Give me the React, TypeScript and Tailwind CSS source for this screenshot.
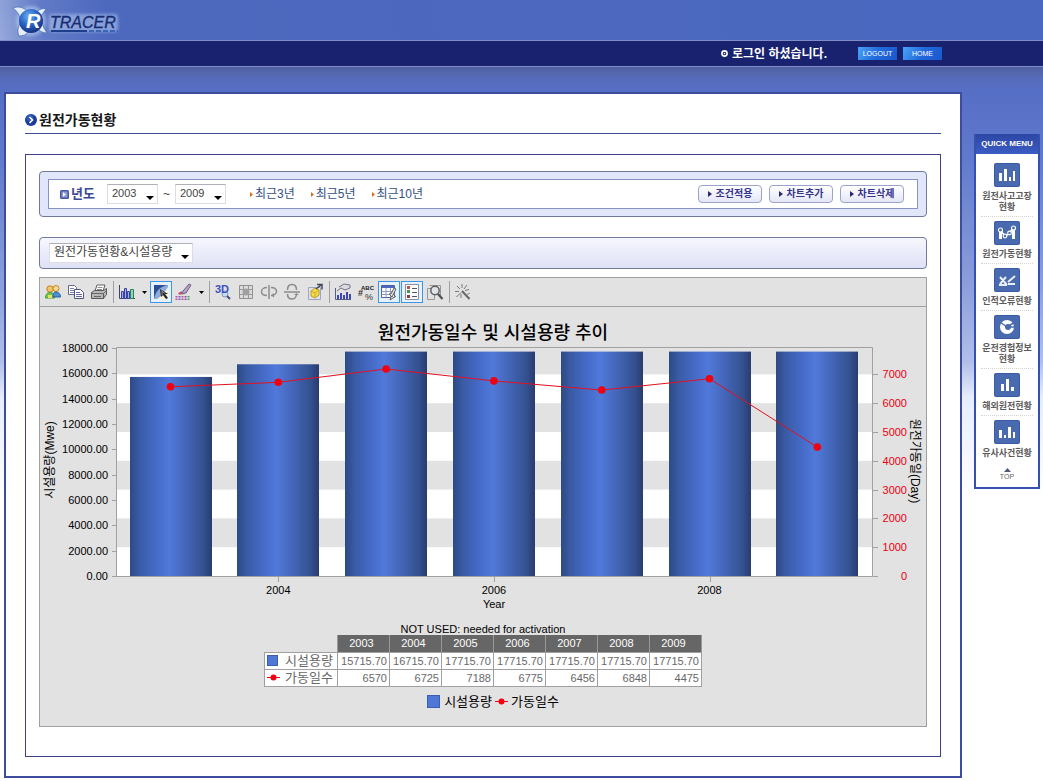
import React, { Fragment } from "react";

interface yearData {
   year: string;
   capacity: number;
   days: number;
}

interface quickItem {
   label: string[];
   icon: React.ReactNode;
}

const data: yearData[] = [
   { year: "2003", capacity: 15715.7, days: 6570 },
   { year: "2004", capacity: 16715.7, days: 6725 },
   { year: "2005", capacity: 17715.7, days: 7188 },
   { year: "2006", capacity: 17715.7, days: 6775 },
   { year: "2007", capacity: 17715.7, days: 6456 },
   { year: "2008", capacity: 17715.7, days: 6848 },
   { year: "2009", capacity: 17715.7, days: 4475 },
];

const Logo: React.FC = () => (
   <svg className="w-[124px] h-10" viewBox="0 0 124 40" role="img" aria-label="R-TRACER">
      <defs>
         <radialGradient id="globe" cx="0.4" cy="0.3" r="0.8">
            <stop offset="0" stopColor="#6fb0f0" />
            <stop offset="0.45" stopColor="#2a66c8" />
            <stop offset="1" stopColor="#10246e" />
         </radialGradient>
         <filter id="glow" x="-20%" y="-40%" width="140%" height="180%">
            <feGaussianBlur stdDeviation="1.8" />
         </filter>
      </defs>
      <g fill="#b4c8f0" filter="url(#glow)">
         <circle cx="31" cy="21" r="15" opacity="0.6" />
         <rect x="49" y="14" width="69" height="18" rx="4" opacity="0.55" />
      </g>
      <g fill="#e4eefb" stroke="#4c72ac" strokeWidth="0.8">
         <path d="M13 8c5-2 10-1 14 3l-7 7c-1-4-3-7-7-10z" />
         <path d="M46 9c-3-1-7 0-9 3l4 5c1-3 3-5 5-8z" />
         <path d="M19 36c-2-5-1-9 1-12l8 8c-2 3-5 4-9 4z" />
         <path d="M47 33c-4 0-8-2-10-5l5-6c1 5 3 8 5 11z" />
      </g>
      <circle cx="31" cy="21" r="12" fill="url(#globe)" />
      <text x="26" y="28" className="font-['Liberation_Sans',sans-serif] text-[20px] font-bold italic" fill="#fff">R</text>
      <text x="50" y="28" className="font-['Liberation_Sans',sans-serif] text-[16px] italic" fill="#152c70" stroke="#152c70" strokeWidth="0.3">TRACER</text>
      <path d="M51 31h36" stroke="#1b3f8c" strokeWidth="2" />
      <path d="M89 31h29" stroke="#3c66b4" strokeWidth="2" strokeDasharray="5 2" />
   </svg>
);

const TopBar: React.FC = () => (
   <header>
      <div className="h-10 bg-[linear-gradient(80deg,#97a9db_0,#627bc7_45px,#4d69be_110px,#4b68c0_100%)]">
         <Logo />
      </div>
      <div className="h-[27px] pr-[101px] flex justify-end items-center border-y border-[#7f8cc8] bg-[#18226f]">
         <svg className="w-[7px] h-[7px] mr-1" viewBox="0 0 7 7">
            <circle cx="3.5" cy="3.5" r="2.6" fill="none" stroke="#fff" strokeWidth="1.6" />
            <circle cx="3.5" cy="3.5" r="0.8" fill="#fff" />
         </svg>
         <span className="text-xs font-bold text-white mr-[31px]">로그인 하셨습니다.</span>
         <div className="flex gap-[6px]">
            {["LOGOUT", "HOME"].map((name) => (
               <button
                  key={name}
                  type="button"
                  className="w-[39px] h-[13px] text-[7px] leading-[13px] text-white bg-[linear-gradient(120deg,#4ba4f8,#2169dc_50%,#1b58cc)]"
               >
                  {name}
               </button>
            ))}
         </div>
      </div>
   </header>
);

const Caret: React.FC = () => (
   <svg className="w-2 h-1" viewBox="0 0 8 4">
      <path d="M0 0h8L4 4z" fill="#000" />
   </svg>
);

const Picker: React.FC<{ label: string; value: string; options: string[]; className: string }> = ({
   label,
   value,
   options,
   className,
}) => (
   <span className={`relative inline-flex h-5 ${className}`}>
      <select
         aria-label={label}
         defaultValue={value}
         className="appearance-none w-full h-full pl-1 pb-1 bg-white border border-[#dcdce4] border-t-[#b0b0b8] text-[#444] text-[length:inherit]"
      >
         {options.map((option) => (
            <option key={option}>{option}</option>
         ))}
      </select>
      <span className="absolute right-1 bottom-1 flex pointer-events-none">
         <Caret />
      </span>
   </span>
);

const FilterBar: React.FC = () => (
   <div className="px-2 py-[7px] rounded border border-[#717a9e] bg-[#e1e6fb]">
      <div className="h-[30px] pl-[11px] pr-[13px] flex items-center border border-[#8794bf] bg-white">
         <svg className="w-[9px] h-[9px] mr-[2px]" viewBox="0 0 9 9">
            <rect width="9" height="9" rx="1.5" fill="#4858a0" />
            <rect x="1.5" y="1.5" width="6" height="6" fill="#8e9ad0" />
            <path d="M3 2.2 6 4.5 3 6.8z" fill="#fff" />
         </svg>
         <span className="text-[13px] font-bold text-[#3b4a94]">년도</span>
         <Picker
            label="시작 년도"
            value="2003"
            options={data.map((d) => d.year)}
            className="w-[51px] ml-3 text-[11px]"
         />
         <span className="w-[17px] text-center text-xs text-[#444]">~</span>
         <Picker
            label="종료 년도"
            value="2009"
            options={data.map((d) => d.year)}
            className="w-[51px] text-[11px]"
         />
         <nav className="ml-6 flex gap-4">
            {["최근3년", "최근5년", "최근10년"].map((text) => (
               <a key={text} href="#" className="flex items-center gap-[2px] text-xs text-[#33507f]">
                  <svg className="w-[3px] h-[5px]" viewBox="0 0 3 5">
                     <path d="M0 0 3 2.5 0 5z" fill="#d8701c" />
                  </svg>
                  {text}
               </a>
            ))}
         </nav>
         <div className="ml-auto flex gap-[7px]">
            {["조건적용", "차트추가", "차트삭제"].map((text) => (
               <button
                  key={text}
                  type="button"
                  className="w-16 h-[18px] flex items-center justify-center gap-1 rounded-sm border border-[#9aa3cc] bg-linear-to-b from-white to-[#e4e6f6] text-[10px] leading-4 font-bold text-[#34348c]"
               >
                  <svg className="w-[4px] h-[6px]" viewBox="0 0 4 6">
                     <path d="M0 0 4 3 0 6z" fill="#28286c" />
                  </svg>
                  {text}
               </button>
            ))}
         </div>
      </div>
   </div>
);

const ToolButton: React.FC<{ title: string; active?: boolean; children: React.ReactNode }> = ({
   title,
   active,
   children,
}) => (
   <button
      type="button"
      title={title}
      className={`w-[22px] h-[22px] flex items-center justify-center ${active ? "border border-[#3c96e8] bg-[#e6f1fb]" : ""}`}
   >
      <svg className="w-[18px] h-[18px] shrink-0" viewBox="0 0 18 18" fill="none">
         {children}
      </svg>
   </button>
);

const Separator: React.FC = () => (
   <span className="w-1 h-[22px] flex justify-center">
      <span className="w-px bg-[#a0a0a0]" />
   </span>
);

const MenuArrow: React.FC<{ title: string }> = ({ title }) => (
   <button type="button" title={title} className="w-[10px] h-[22px] flex items-center justify-center">
      <svg className="w-[5px] h-[3px]" viewBox="0 0 5 3">
         <path d="M0 0h5L2.5 3z" fill="#000" />
      </svg>
   </button>
);

const ChartToolbar: React.FC = () => (
   <div className="h-[29px] pl-[2px] flex items-center gap-px border-b border-[#a0a0a0]">
      <ToolButton title="사용자">
         <circle cx="6" cy="6" r="3.2" fill="#f0c468" stroke="#c88428" />
         <path d="M1.5 15c0-4 2-5.5 4.5-5.5s4.5 1.5 4.5 5.5z" fill="#6cc850" stroke="#48983c" />
         <circle cx="12" cy="5.5" r="3" fill="#f6d890" stroke="#c88428" />
         <path d="M9 14c0-4 1-5 3-5s4.500 1.500 4.500 5z" fill="#4c90d8" stroke="#2c5c94" />
         <path d="M4 15v-3h4v3z" fill="#e8e060" />
      </ToolButton>
      <ToolButton title="복사">
         <path d="M1.5 2.5h6l2 2v7h-8z" fill="#fff" stroke="#64688c" />
         <path d="M3 5.5h4M3 7.5h5M3 9.5h4" stroke="#7c80b0" />
         <path d="M7.5 6.5h6l3 3v6h-9z" fill="#fff" stroke="#50547c" />
         <path d="M9 9.5h4M9 11.5h6M9 13.5h6" stroke="#6468a4" />
      </ToolButton>
      <ToolButton title="인쇄">
         <path d="m5 8 2-6h8l-2 6" fill="#fff" stroke="#606060" />
         <path d="M7.5 4.5h5M7 6.5h5" stroke="#909090" />
         <path d="m1.5 9.5 3-2h9l3-2v6l-3 4h-12z" fill="#b8b8b8" stroke="#585858" />
         <path d="M2 10.5h11.5l3-3M4 13.5h7" stroke="#686868" />
         <path d="M13.5 10.5v5" stroke="#585858" />
      </ToolButton>
      <Separator />
      <ToolButton title="차트 종류">
         <path d="M1.5 2v13.5H17" stroke="#404060" />
         <path d="M3.5 8.5h2v7h-2zM6.5 5.5h2v10h-2zM9.5 8.5h2v7h-2z" fill="#9cb0f0" stroke="#3c44a0" />
         <path d="M12.5 6.5h3v9h-3z" fill="#90d8b4" stroke="#308060" />
      </ToolButton>
      <MenuArrow title="차트 종류 목록" />
      <ToolButton title="선택" active>
         <path d="M2 2h14v14H2z" fill="#2c4c94" />
         <path d="M2 16C3 9 8 3 16 2v14z" fill="#8cacdc" />
         <path d="M16 4v12H5C8 14 12 10 16 4z" fill="#f4f0dc" />
         <path d="m8 6 1 8 2-2 3 4 2-1-3-4h3z" fill="#202020" />
         <path d="m9 7.500 4 3M10 9v3" stroke="#e8e8e8" strokeWidth="0.600" />
      </ToolButton>
      <ToolButton title="색상">
         <path d="m7 11 1-3 6-7 2 1-5 8z" fill="#b4a0c8" stroke="#706080" />
         <path d="M7 11c-1 1-2 1-4 0 1-2 3-3 4-2" fill="#c85070" />
         <path d="M1.5 13v4M7.5 13v4" stroke="#c050a0" strokeWidth="2" strokeDasharray="1.5 1" />
         <path d="M4.5 13v4M10.5 13v4" stroke="#8058b8" strokeWidth="2" strokeDasharray="1.5 1" />
         <path d="M13.5 13v4" stroke="#50a060" strokeWidth="2" strokeDasharray="1.5 1" />
      </ToolButton>
      <MenuArrow title="색상 목록" />
      <Separator />
      <ToolButton title="3D">
         <circle cx="11" cy="11" r="3" fill="#c4dcf4" stroke="#8098c0" />
         <path d="m13 13 3 3" stroke="#504880" strokeWidth="2" />
         <text x="1" y="10" className="font-['Liberation_Sans',sans-serif] text-[11px] font-bold" fill="#3c50c0">3D</text>
      </ToolButton>
      <ToolButton title="격자">
         <path d="M2.5 2.5h13v13h-13z" fill="#dcdcdc" stroke="#909090" />
         <path d="M6.5 2.5v13M11.5 2.5v13M2.5 6.5h13M2.5 11.5h13" stroke="#989898" />
         <circle cx="9" cy="9" r="3.5" fill="#a0a0a0" />
      </ToolButton>
      <ToolButton title="좌우 회전">
         <path d="M9 2v14" stroke="#8c8c8c" strokeWidth="1.5" />
         <path d="M7 12.5C3 12.500 1.500 10.500 1.500 8.500s2-4 5.500-4M11 4.500c4 0 5.500 2 5.500 4s-2 4-5.500 4" stroke="#8c8c8c" strokeWidth="1.5" />
         <path d="m14 10-3 2.500 3 2z" fill="#8c8c8c" />
      </ToolButton>
      <ToolButton title="상하 회전">
         <path d="M1 9h16" stroke="#8c8c8c" strokeWidth="1.5" />
         <path d="M4.500 7c0-4 2-5.500 4.500-5.500S13.500 3.500 13.500 7M4.500 11c0 4 2 5 4.500 5s4.500-2 4.500-5" stroke="#8c8c8c" strokeWidth="1.5" />
         <path d="m11 12 2.500-2 2.500 2z" fill="#8c8c8c" />
      </ToolButton>
      <ToolButton title="내보내기">
         <path d="M2.5 4.5h12v12h-12z" fill="#e4e0ec" stroke="#98a8c4" />
         <path d="m5 8 4-3 4 2v5l-4 3-4-2z" fill="#f4dc48" stroke="#b89c28" />
         <path d="m5 8 4 2 4-3M9 10v5" stroke="#c8ac30" />
         <path d="m10 6 5-4m-4-.5h5v5" stroke="#404858" strokeWidth="1.5" />
      </ToolButton>
      <Separator />
      <ToolButton title="축 설정">
         <path d="M1.5 5v11.5H17" stroke="#585c88" />
         <path d="M4 12v4M7 10v6M10 12v4M13 9v7M16 11v5" stroke="#3c48b8" strokeWidth="2" />
         <path d="m3 8 4-3 4 2 5-2V2l-6-1-5 3" fill="#dcd8e0" stroke="#787488" />
      </ToolButton>
      <ToolButton title="값 표시">
         <text x="4" y="7" className="font-['Liberation_Sans',sans-serif] text-[6px] font-bold" fill="#202020">ABC</text>
         <text x="1" y="13" className="font-['Liberation_Sans',sans-serif] text-[9px] font-bold" fill="#303030">#</text>
         <text x="8" y="17" className="font-['Liberation_Sans',sans-serif] text-[9px]" fill="#303030">%</text>
      </ToolButton>
      <ToolButton title="데이터 표" active>
         <path d="M1.5 2.5h13v12h-13z" fill="#fff" stroke="#4c60a0" />
         <path d="M2 3h12v2H2z" fill="#4c68c0" />
         <path d="M1.5 8.5h13M1.5 11.5h13M6 5v9.500M10.500 5v9.500" stroke="#8c9cc8" />
         <path d="m9 11 3 3 4-8-2-1-3 6zM11 14l-1 3 6-4" fill="#e8e4d4" stroke="#606060" />
      </ToolButton>
      <ToolButton title="범례" active>
         <path d="M2.5 1.5h13v15h-13z" fill="#fff" stroke="#8890a4" />
         <path d="M4 3h3v3H4z" fill="#c85040" />
         <path d="M4 7h3v3H4z" fill="#50944c" />
         <path d="M4 12h3v3H4z" fill="#8c3c50" />
         <path d="M9 5.500h5M9 9.500h5M9 13.500h5" stroke="#505868" />
      </ToolButton>
      <ToolButton title="확대">
         <path d="M1.5 5.5h7v11h-7zM3.5 2.5h11v11" stroke="#989898" />
         <circle cx="9" cy="7.5" r="4.2" fill="#e0e4e8" stroke="#606068" strokeWidth="1.5" />
         <path d="m12 11 4.500 5" stroke="#505058" strokeWidth="2.2" />
      </ToolButton>
      <Separator />
      <ToolButton title="속성">
         <path d="m8 8 7.500 8" stroke="#686868" strokeWidth="2" />
         <path d="m3 3 3 3M8 1v4M13 2l-3 4M1 8.500h4M2.500 14 7 9.500M11 7.500l4-1M7 11v4" stroke="#787878" />
         <path d="m12 12 4-2" stroke="#909090" />
      </ToolButton>
   </div>
);

const PLOT = { left: 77, right: 833, top: 5, bottom: 233 };
const plotHeight = PLOT.bottom - PLOT.top;
const barX = (i: number) => 130.5 + i * 107.8;
const capacityY = (v: number) => PLOT.bottom - (v / 18000) * plotHeight;
const daysY = (v: number) => PLOT.bottom - v * 0.0288;

const Chart: React.FC = () => (
   <svg
      className="block w-full h-auto font-['Liberation_Sans','Noto_Sans_CJK_KR',sans-serif]"
      viewBox="0 0 886 268"
      role="img"
      aria-label="원전가동일수 및 시설용량 추이"
   >
      <defs>
         <linearGradient id="bar">
            <stop offset="0" stopColor="#2d4a86" />
            <stop offset="0.12" stopColor="#3a5ba6" />
            <stop offset="0.32" stopColor="#456bc8" />
            <stop offset="0.48" stopColor="#5079da" />
            <stop offset="0.7" stopColor="#4264b4" />
            <stop offset="0.9" stopColor="#34508f" />
            <stop offset="1" stopColor="#283c6e" />
         </linearGradient>
      </defs>
      {[0, 2000, 4000, 6000].map((v) => (
         <rect key={v} x={PLOT.left} y={daysY(v + 1000)} width={PLOT.right - PLOT.left} height="28.8" fill="#fff" />
      ))}
      <path d="M76.5 4.5h756v229h-756z" fill="none" stroke="#a0a0a0" />
      {data.map((d, i) => (
         <rect
            key={d.year}
            x={Math.round(barX(i)) - 41}
            y={capacityY(d.capacity)}
            width="82"
            height={PLOT.bottom - capacityY(d.capacity)}
            fill="url(#bar)"
         />
      ))}
      <polyline
         points={data.map((d, i) => `${barX(i)},${daysY(d.days)}`).join(" ")}
         fill="none"
         stroke="#e41020"
      />
      {data.map((d, i) => (
         <circle key={d.year} cx={barX(i)} cy={daysY(d.days)} r="3.8" fill="#f00010" />
      ))}
      {[0, 2000, 4000, 6000, 8000, 10000, 12000, 14000, 16000, 18000].map((v) => (
         <Fragment key={v}>
            <path d={`M72 ${Math.round(capacityY(v)) + 0.5}h5`} stroke="#a0a0a0" />
            <text x="68" y={capacityY(v) + 4} textAnchor="end" className="text-[11px]">
               {v.toFixed(2)}
            </text>
         </Fragment>
      ))}
      {[0, 1000, 2000, 3000, 4000, 5000, 6000, 7000].map((v) => (
         <Fragment key={v}>
            <path d={`M833 ${Math.round(daysY(v)) + 0.5}h5`} stroke="#a0a0a0" />
            <text x="867" y={daysY(v) + 4} textAnchor="end" fill="#ec0010" className="text-[11px]">
               {v}
            </text>
         </Fragment>
      ))}
      {[1, 3, 5].map((i) => (
         <Fragment key={i}>
            <path d={`M${Math.round(barX(i)) + 0.5} 234v5`} stroke="#a0a0a0" />
            <text x={barX(i)} y="251" textAnchor="middle" className="text-[11px]">
               {data[i].year}
            </text>
         </Fragment>
      ))}
      <text x="454" y="265" textAnchor="middle" className="text-[11px]">Year</text>
      <text transform="translate(14 117) rotate(-90)" textAnchor="middle" className="text-xs">시설용량(Mwe)</text>
      <text transform="translate(871 118) rotate(90)" textAnchor="middle" className="text-xs">원전가동일(Day)</text>
   </svg>
);

const LineMark: React.FC = () => (
   <svg className="w-[13px] h-[7px] shrink-0" viewBox="0 0 13 7">
      <path d="M0 3.5h13" stroke="#f00010" />
      <circle cx="6.5" cy="3.5" r="3" fill="#f00010" />
   </svg>
);

const DataTable: React.FC = () => (
   <table className="mt-3 mx-auto w-[438px] table-fixed border-collapse text-[11px] leading-4 text-[#686868]">
      <caption className="text-[11px] leading-3 text-black">NOT USED: needed for activation</caption>
      <colgroup>
         <col className="w-[73px]" />
      </colgroup>
      <thead>
         <tr className="h-[17px]">
            <td />
            {data.map((d) => (
               <th key={d.year} scope="col" className="p-0 pr-1 font-normal text-white bg-[#666] border-x border-[#9a9a9a]">
                  {d.year}
               </th>
            ))}
         </tr>
      </thead>
      <tbody>
         <tr className="h-[17px] bg-white">
            <th scope="row" className="p-0 border border-[#a0a0a0] font-normal text-[13px]">
               <span className="flex items-center gap-[7px] pl-[2px] whitespace-nowrap">
                  <span className="w-[11px] h-[11px] bg-[#4f78d6] border border-[#3c5eb0]" />
                  시설용량
               </span>
            </th>
            {data.map((d) => (
               <td key={d.year} className="p-0 pr-[2px] text-right border border-[#a0a0a0]">
                  {d.capacity.toFixed(2)}
               </td>
            ))}
         </tr>
         <tr className="h-[17px] bg-white">
            <th scope="row" className="p-0 border border-[#a0a0a0] font-normal text-[13px]">
               <span className="flex items-center gap-[5px] pl-[2px] whitespace-nowrap">
                  <LineMark />
                  가동일수
               </span>
            </th>
            {data.map((d) => (
               <td key={d.year} className="p-0 pr-[2px] text-right border border-[#a0a0a0]">
                  {d.days}
               </td>
            ))}
         </tr>
      </tbody>
   </table>
);

const ChartPanel: React.FC = () => (
   <section className="mt-2 border border-[#a0a0a0] bg-[#e2e2e2]">
      <ChartToolbar />
      <h2 className="pt-4 pl-5 text-center text-[18px] leading-5 font-medium text-black">
         원전가동일수 및 시설용량 추이
      </h2>
      <Chart />
      <DataTable />
      <div className="mt-[6px] pb-[15px] pl-5 h-[33px] flex justify-center items-center text-[13px] leading-[18px] text-black">
         <span className="w-[13px] h-[13px] mr-1 bg-[#4f78d6] border border-[#3c5eb0]" />
         시설용량
         <span className="flex mx-[3px]">
            <LineMark />
         </span>
         가동일수
      </div>
   </section>
);

const quickItems: quickItem[] = [
   {
      label: ["원전사고고장", "현황"],
      icon: <path d="M5 10h3v8H5zM10 6h3v12h-3zM15 14h2v4h-2zM19 8h2v10h-2z" fill="#fff" />,
   },
   {
      label: ["원전가동현황"],
      icon: (
         <g stroke="#fff" fill="none">
            <path d="M6.5 9v9M19.5 8v10" strokeWidth="3" />
            <path d="m7 10 4 5 4-2 4-6" strokeWidth="1.5" />
            <g fill="#4a6ab0" strokeWidth="1.2">
               <circle cx="6.5" cy="9" r="2" />
               <circle cx="11" cy="15" r="1.8" />
               <circle cx="15.5" cy="12" r="1.8" />
               <circle cx="19.5" cy="7" r="2" />
            </g>
         </g>
      ),
   },
   {
      label: ["인적오류현황"],
      icon: (
         <path d="m6 9 7 8M12 9l-6 7M5 17h8M14 14l7-6M14 16h7" stroke="#e8eefa" fill="none" strokeWidth="2" />
      ),
   },
   {
      label: ["운전경험정보", "현황"],
      icon: (
         <g>
            <circle cx="13" cy="12" r="7" fill="#fff" />
            <circle cx="14" cy="12" r="3" fill="#4a6ab0" />
            <path d="m13 12 8-5M13 12 6 7M15 12h6" stroke="#4a6ab0" strokeWidth="1.5" />
         </g>
      ),
   },
   {
      label: ["해외원전현황"],
      icon: <path d="M7 11h3v7H7zM12 6h3v12h-3zM17 14h3v4h-3z" fill="#fff" />,
   },
   {
      label: ["유사사건현황"],
      icon: <path d="M5 10h3v8H5zM10 15h2v3h-2zM14 7h3v11h-3zM19 12h2v6h-2z" fill="#fff" />,
   },
];

const QuickMenu: React.FC = () => (
   <aside className="mt-[42px] w-[66px] shrink-0 self-start border-2 border-t-0 border-[#3650b0] bg-white">
      <h2 className="h-5 leading-5 text-center text-[8px] font-bold text-white bg-linear-to-b from-[#2c47a4] to-[#3c5cc4]">
         QUICK MENU
      </h2>
      <ul className="pt-[5px] px-[5px]">
         {quickItems.map((item, index) => (
            <li
               key={item.label[0]}
               className={`pt-1 pb-[3px] border-b border-dotted ${index === quickItems.length - 1 ? "border-transparent" : "border-[#d4d4d4]"}`}
            >
               <a href="#" className="flex flex-col items-center gap-1">
                  <svg className="w-[26px] h-6" viewBox="0 0 26 24">
                     <rect width="26" height="24" rx="2" fill="#3a5aa4" />
                     <rect x="1" y="1" width="24" height="22" rx="1" fill="#4a6ab0" />
                     {item.icon}
                  </svg>
                  <span className="text-[9px] leading-[11px] font-bold text-[#5c5c5c] text-center">
                     {item.label.map((line) => (
                        <span key={line} className="block whitespace-nowrap">
                           {line}
                        </span>
                     ))}
                  </span>
               </a>
            </li>
         ))}
      </ul>
      <a href="#" className="pt-[5px] pb-[5px] flex flex-col items-center text-[7px] leading-[10px] text-[#666]">
         <svg className="w-[7px] h-1" viewBox="0 0 7 4">
            <path d="M3.5 0 7 4H0z" fill="#505878" />
         </svg>
         TOP
      </a>
   </aside>
);

const App: React.FC = () => {
   return (
      <div className="min-h-screen flex flex-col bg-white font-['Liberation_Sans','Noto_Sans_CJK_KR',sans-serif]">
         <TopBar />
         <div className="grow pt-[25px] pb-[3px] pl-1 pr-[3px] flex gap-3 bg-[linear-gradient(180deg,#50609f_0,#566bb8_10px,#566fc6_24px,#6079cc_90px,#8c9fdc_220px,#b0bfea_295px,#e6edfb_330px,#ffffff_430px)]">
            <main className="grow min-w-0 px-[19px] pt-[17px] pb-[19px] border-2 border-[#3d4c9c] bg-white">
               <h1 className="pb-1 flex items-center gap-[2px] border-b border-[#3d4c9c] text-[14px] leading-[18px] font-bold text-[#181818]">
                  <svg className="w-3 h-3" viewBox="0 0 12 12">
                     <circle cx="6" cy="6" r="6" fill="#1c3c9c" />
                     <circle cx="5" cy="4" r="3.5" fill="#4070d0" opacity="0.6" />
                     <path d="m4.5 3 3 3-3 3" fill="none" stroke="#fff" strokeWidth="1.6" />
                  </svg>
                  원전가동현황
               </h1>
               <div className="mt-5 px-[13px] pt-4 pb-[29px] border border-[#3f3f8c]">
                  <FilterBar />
                  <div className="mt-5 h-8 pl-[9px] flex items-center rounded border border-[#717a9e] bg-linear-to-b from-[#f7f7fe] to-[#dfe1f5]">
                     <Picker
                        label="차트 선택"
                        value="원전가동현황&시설용량"
                        options={["원전가동현황&시설용량"]}
                        className="w-36 text-xs"
                     />
                  </div>
                  <ChartPanel />
               </div>
            </main>
            <QuickMenu />
         </div>
      </div>
   );
};

export default App;
